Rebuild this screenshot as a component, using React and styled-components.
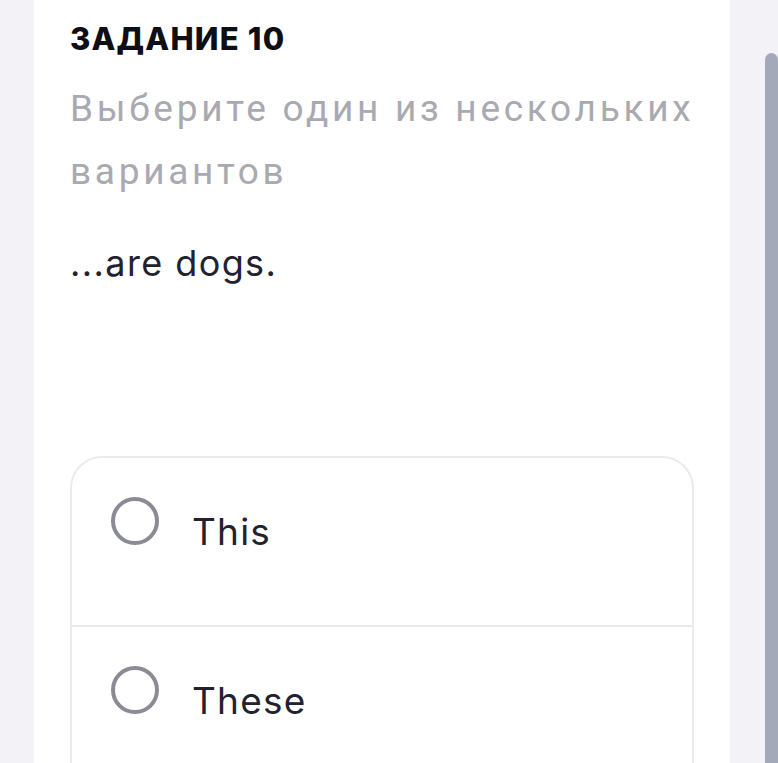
import React from "react";
import styled, { createGlobalStyle } from "styled-components";

const Global = createGlobalStyle`
  html, body { margin: 0; padding: 0; background: #f3f3f7; overflow: hidden; }
  body { font-family: Inter, "Noto Sans", sans-serif; }
`;

const Page = styled.div`
  display: flex;
  height: 763px;
  padding-left: 34px;
  box-sizing: border-box;
  background: #f3f3f7;
`;

const Card = styled.main`
  width: 696px;
  background: #ffffff;
  padding: 20px 36px 0 36px;
  box-sizing: border-box;
  display: flex;
  flex-direction: column;
`;

const Track = styled.div`
  margin-left: 35px;
  width: 13px;
  padding-top: 53px;
  display: flex;
`;

const Thumb = styled.div`
  flex: 1;
  background: #a4a9ba;
  border-radius: 7px 7px 0 0;
`;

const Heading = styled.h1`
  margin: 0;
  font-family: Inter, sans-serif;
  font-weight: 800;
  font-size: 31px;
  line-height: 37px;
  color: #0e0e14;
  letter-spacing: 1.2px;
`;

const Hint = styled.p`
  margin: 20px -8px 0 0;
  font-family: Roboto, sans-serif;
  font-weight: 400;
  font-size: 37px;
  line-height: 63px;
  letter-spacing: 3.7px;
  color: #a9a9b1;
`;

const Question = styled.p`
  margin: 35px 0 0 0;
  font-family: Inter, sans-serif;
  font-size: 36px;
  line-height: 50px;
  letter-spacing: 1.4px;
  color: #22222f;
`;

const Options = styled.div`
  margin-top: 168px;
  border: 2px solid #ebebee;
  border-bottom: none;
  border-radius: 32px 32px 0 0;
  display: flex;
  flex-direction: column;
`;

const Option = styled.label`
  display: flex;
  align-items: flex-start;
  gap: 33px;
  height: 128px;
  padding: 39px 0 0 39px;
  box-sizing: content-box;
  border-top: ${(p) => (p.$first ? "none" : "2px solid #ebebee")};
`;

const Radio = styled.span`
  flex: none;
  width: 48px;
  height: 48px;
  border: 4px solid #8b8b96;
  border-radius: 50%;
  box-sizing: border-box;
`;

const OptionText = styled.span`
  font-family: Inter, sans-serif;
  font-size: 37px;
  line-height: 50px;
  letter-spacing: 1.2px;
  color: #22222f;
  margin-top: 10px;
`;

const options = ["This", "These"];

export default function App() {
  return (
    <>
      <Global />
      <Page>
        <Card>
          <Heading>ЗАДАНИЕ 10</Heading>
          <Hint>Выберите один из нескольких вариантов</Hint>
          <Question>...are dogs.</Question>
          <Options>
            {options.map((o, i) => (
              <Option key={o} $first={i === 0}>
                <Radio />
                <OptionText>{o}</OptionText>
              </Option>
            ))}
          </Options>
        </Card>
        <Track>
          <Thumb />
        </Track>
      </Page>
    </>
  );
}
